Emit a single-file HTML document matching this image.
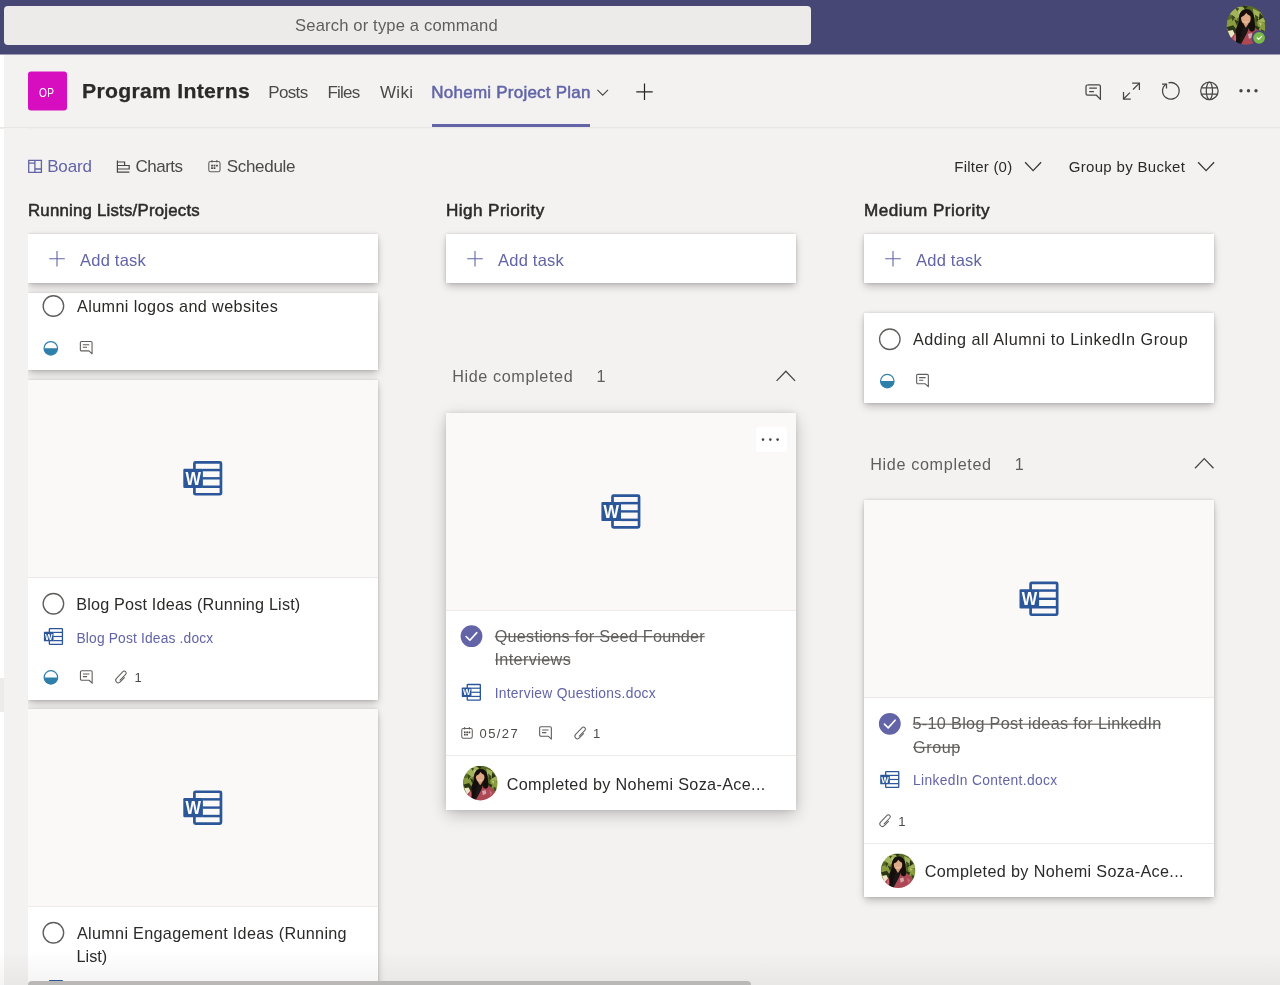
<!DOCTYPE html>
<html lang="en">
<head>
<meta charset="utf-8">
<title>Program Interns - Nohemi Project Plan</title>
<style>
html,body{margin:0;padding:0}
body{width:1280px;height:985px;overflow:hidden;position:relative;background:#f3f2f1;font-family:"Liberation Sans",sans-serif;}
.a{position:absolute}
.t{position:absolute;white-space:nowrap;font-family:"Liberation Sans",sans-serif}
.b{font-weight:700;-webkit-text-stroke:0.25px currentColor}
.sb{-webkit-text-stroke:0.5px currentColor}
.op{transform:scaleX(.8);transform-origin:0 0}
#top{left:0;top:0;width:1280px;height:54px;background:#464775}
#topedge{left:0;top:54px;width:1280px;height:1px;background:#9c9cb4}
#search{left:4px;top:6px;width:807px;height:39px;border-radius:4px;background:#edebe9}
#strip{left:0;top:55px;width:4px;height:930px;background:#fff}
#stripg{left:0;top:678px;width:4px;height:34px;background:#ecebe9}
#hline{left:0;top:127px;width:1280px;height:2px;background:linear-gradient(#e8e7e5 50%,#efeeec 50%)}
#tabline{left:432px;top:124px;width:158px;height:3px;background:#6264a7}
#c1mask{left:4px;top:128px;width:24px;height:857px;background:#f3f2f1}
.card{position:absolute;background:#fff;box-shadow:0 4px 8px -1px rgba(0,0,0,.25),0 0 3px rgba(0,0,0,.15)}
.card.hov{box-shadow:0 5px 16px -1px rgba(0,0,0,.24),0 0 5px rgba(0,0,0,.10)}
.pv{position:absolute;left:0;top:0;right:0;background:#faf9f8;border-bottom:1px solid #edebe9}
.dv{position:absolute;left:0;right:0;height:1px;background:#edebe9}
svg{position:absolute;overflow:visible}
#sbar{z-index:5;left:28px;top:981px;width:723px;height:8px;border-radius:4px;background:#bab8b7}
#txt{position:absolute;left:0;top:0;width:1280px;height:985px;will-change:transform}
#fade{left:0;top:950px;width:1280px;height:35px;background:linear-gradient(rgba(0,0,0,0),rgba(0,0,0,.045))}
#more{left:756px;top:427px;width:30.5px;height:24.6px;background:#fff;border-radius:3px}
</style>
</head>
<body>
<svg width="0" height="0" style="position:absolute">
 <defs>
  <symbol id="word" viewBox="0 0 39 34.5" overflow="visible">
   <rect x="11.1" y="1.35" width="26.55" height="31.8" rx="1.1" fill="none" stroke="#2b579a" stroke-width="2.7"/>
   <rect x="19" y="7.7" width="18.6" height="2.5" fill="#2b579a"/>
   <rect x="19" y="16" width="18.6" height="2.4" fill="#2b579a"/>
   <rect x="19" y="24.4" width="18.6" height="2.5" fill="#2b579a"/>
   <rect x="0" y="7.7" width="19.6" height="19.2" rx="1.2" fill="#2b579a"/>
   <text transform="translate(9.9 23.4) scale(.93 1)" text-anchor="middle" font-family="Liberation Sans, sans-serif" font-weight="700" font-size="17.6" fill="#fff">W</text>
  </symbol>
  <symbol id="cmt" viewBox="0 0 12.8 13.5" overflow="visible">
   <path d="M1.8 0.55h9.2a1.25 1.25 0 0 1 1.25 1.25v11.1l-3.1-2.9H1.8a1.25 1.25 0 0 1-1.25-1.25V1.8a1.25 1.25 0 0 1 1.25-1.25z" fill="none" stroke="#605e5c" stroke-width="1.1" stroke-linejoin="round"/>
   <path d="M3 3.8h6.5M3 6.4h4.2" stroke="#605e5c" stroke-width="1.1" fill="none"/>
  </symbol>
  <symbol id="prog" viewBox="0 0 16 16" overflow="visible">
   <circle cx="8" cy="8" r="7.1" fill="#fff" stroke="#2f7fab" stroke-width="1.3"/>
   <path d="M0.9 8a7.1 7.1 0 0 0 14.2 0z" fill="#2f7fab"/>
  </symbol>
  <symbol id="clip" viewBox="-6 -7 12 14" overflow="visible">
   <g transform="rotate(44)">
    <path d="M2.6 -1.6V4.4A2.6 2.6 0 0 1 -2.6 4.4V-4.9A1.9 1.9 0 0 1 1.2 -4.9V3.2" fill="none" stroke="#605e5c" stroke-width="1" stroke-linecap="round"/>
   </g>
  </symbol>
  <symbol id="cal" viewBox="0 0 13 13" overflow="visible">
   <rect x="0.6" y="1.8" width="11.4" height="10.4" rx="1.8" fill="none" stroke="#605e5c" stroke-width="1.1"/>
   <path d="M3.8 0.2v2.6M8.8 0.2v2.6" stroke="#605e5c" stroke-width="1.1"/>
   <path d="M3 5.9h1.8M5.5 5.9h1.8M8 5.9h1.8M3 8.5h1.8M5.5 8.5h1.8" stroke="#484644" stroke-width="1.7"/>
  </symbol>
  <symbol id="circ" viewBox="0 0 22 22" overflow="visible">
   <circle cx="11" cy="11" r="10.25" fill="#fff" stroke="#605e5c" stroke-width="1.35"/>
  </symbol>
  <symbol id="chk" viewBox="0 0 22 22" overflow="visible">
   <circle cx="11" cy="11" r="10.9" fill="#6264a7"/>
   <path d="M5.6 11.3l3.8 3.8 6.9-7.7" fill="none" stroke="#fff" stroke-width="1.6" stroke-linecap="round" stroke-linejoin="round"/>
  </symbol>
  <symbol id="plus" viewBox="0 0 16 16" overflow="visible">
   <path d="M8 0.2v15.6M0.2 8h15.6" stroke="#6264a7" stroke-width="1.1" fill="none"/>
  </symbol>
  <symbol id="chd" viewBox="0 0 20 12" overflow="visible">
   <path d="M0.6 0.8 10 10.6 19.4 0.8" fill="none" stroke="#3b3a39" stroke-width="1.6"/>
  </symbol>
  <symbol id="chu" viewBox="0 0 20 12" overflow="visible">
   <path d="M0.6 11.2 10 1.4 19.4 11.2" fill="none" stroke="#484644" stroke-width="1.3"/>
  </symbol>
  <symbol id="ava" viewBox="0 0 40 40" overflow="visible">
   <clipPath id="avc"><circle cx="20" cy="20" r="20"/></clipPath>
   <filter id="avb" x="-10%" y="-10%" width="120%" height="120%"><feGaussianBlur stdDeviation="0.8"/></filter>
   <g clip-path="url(#avc)"><g filter="url(#avb)">
    <rect width="40" height="40" fill="#586a26"/>
    <path d="M3 8l8-7 9 1-3 6-8 7zM27 3l8 4 5 10-7 1-5-7z" fill="#a3b35a"/>
    <path d="M1 15l9-3 3 8-8 7-5-3zM31 15l8 3 1 9-7-1z" fill="#8a9c41"/>
    <path d="M0 22l7-2 5 7-6 4zM34 7l4 5-5 3zM28 20l6 2-2 5zM8 14l4 2-1 5zM16 0l6 1-3 3zM30 12l3 2-2 3z" fill="#2b3614"/>
    <path d="M5 9l4 3-3 4zM29 9l4 3-3 4zM35 24l4 2-2 4zM9 2l4 1-2 3z" fill="#3a481b"/>
    <path d="M12 5l5 1-3 4zM33 17l3 1-1 3z" fill="#c3cd7c"/>
    <path d="M1.5 26l5-1 2.5 5-4.5 3z" fill="#efe6c9"/>
    <path d="M4 42c0-8 2-13 8-15l8-3 9-1c5 2 8 6 9 10l1 9z" fill="#ad4855"/>
    <path d="M22 29l4-1 1 4-4 2z" fill="#d7a3ae"/>
    <path d="M8 30l3 1-1 5-3-1zM30 28l4 3-2 4z" fill="#c26a76"/>
    <path d="M15 21l9-1-3 8-7 13h-4l2-9z" fill="#1a1613"/>
    <path d="M12.8 13c0-6 3.4-9.6 7.4-9.6 4.2 0 7.8 3.2 8.2 9 .3 5 1.6 8 .6 12.2-1.6 2.8-4.6 2.2-5.6.2l-.8-4h-5l-1.8 5c-1 3-.4 8-3.4 12.2h-3c1.4-5-.4-9 .4-13 1-5 3-7 3-12z" fill="#15110e"/>
    <ellipse cx="19.9" cy="13.2" rx="4.9" ry="6.2" fill="#dfa985"/>
    <path d="M14.4 11.8c.8-4.6 3.2-6.4 6-6.4 2.8 0 4.6 2 5 5.4-2.6-.8-4.4-2.4-5.2-3.6-1.2 2-2.8 3.8-5.8 4.6z" fill="#15110e"/>
    <path d="M17.6 15.8c1.4 1.2 3.2 1.2 4.6 0-.6 1.8-4 1.8-4.6 0z" fill="#f6ece6"/>
    <path d="M17.4 18.6l2.4 4 2.8-4z" fill="#d39b77"/>
   </g></g>
  </symbol>
 </defs>
</svg>

<div id="top" class="a"></div><div id="topedge" class="a"></div>
<div id="search" class="a"></div>
<div id="strip" class="a"></div><div id="stripg" class="a"></div>
<div id="hline" class="a"></div>
<div id="tabline" class="a"></div>

<!-- ===== column 1 ===== -->
<div class="card" style="left:28px;top:293px;width:350px;height:77px"></div>
<div class="card" style="left:28px;top:380px;width:350px;height:320px"><div class="pv" style="height:197px"></div></div>
<div class="card" style="left:28px;top:709px;width:350px;height:300px"><div class="pv" style="height:197px"></div></div>
<div class="card" style="left:28px;top:234px;width:350px;height:49px"></div>
<div id="c1mask" class="a"></div>

<!-- ===== column 2 ===== -->
<div class="card" style="left:446px;top:234px;width:350px;height:49px"></div>
<div class="card hov" style="left:446px;top:413px;width:350px;height:397px"><div class="pv" style="height:197px"></div><div class="dv" style="top:342px"></div></div>
<div id="more" class="a"></div>

<!-- ===== column 3 ===== -->
<div class="card" style="left:864px;top:234px;width:350px;height:49px"></div>
<div class="card" style="left:864px;top:313px;width:350px;height:90px"></div>
<div class="card" style="left:864px;top:500px;width:350px;height:397px"><div class="pv" style="height:197px"></div><div class="dv" style="top:343px"></div></div>

<div id="fade" class="a"></div>
<div id="sbar" class="a"></div>

<!-- ===== icon overlay (page coordinates) ===== -->
<svg style="left:0;top:0;will-change:transform" width="1280" height="985" viewBox="0 0 1280 985">
 <!-- team logo -->
 <rect x="28" y="71.5" width="39" height="39" rx="3" fill="#d60ec0"/>
 <!-- me avatar -->
 <use href="#ava" x="1226.4" y="5.6" width="39.2" height="39.2"/>
 <circle cx="1259.1" cy="37.8" r="7.6" fill="#464775"/><circle cx="1259.1" cy="37.8" r="5.9" fill="#7ab84a"/>
 <path d="M1257.2 37.9l1.5 1.5 2.9-3.1" fill="none" stroke="#fff" stroke-width="1.2" stroke-linecap="round" stroke-linejoin="round"/>
 <!-- header icons -->
 <g fill="none" stroke="#484644" stroke-width="1.25">
  <path d="M1087.6 84.8h11.2a1.6 1.6 0 0 1 1.6 1.6v13l-4-4.2h-8.8a1.6 1.6 0 0 1-1.6-1.6v-7.2a1.6 1.6 0 0 1 1.6-1.6z" stroke-linejoin="round"/>
  <path d="M1089.2 88h7.7M1089.2 91.6h4.7"/>
  <path d="M1132.1 83.1h7.3v7M1139.4 83.1l-6.4 6.4M1130.8 99h-7.3v-7M1123.5 99l6.4-6.4"/>
  <path d="M1168.45 82.9A8.3 8.3 0 1 1 1166.3 83.9"/>
  <path d="M1162 84.1h4.5v4.3"/>
  <circle cx="1209.4" cy="90.9" r="8.7"/>
  <ellipse cx="1209.4" cy="90.9" rx="3.1" ry="8.7"/>
  <path d="M1201.3 87.8h16.2M1201.3 94h16.2"/>
 </g>
 <g fill="#484644"><circle cx="1241" cy="90.8" r="1.7"/><circle cx="1248.5" cy="90.8" r="1.7"/><circle cx="1256" cy="90.8" r="1.7"/></g>
 <!-- tab chevron + plus -->
 <path d="M597.4 89.8l5.3 5.3 5.3-5.3" fill="none" stroke="#484644" stroke-width="1.1"/>
 <path d="M644.5 83.6v16.4M636.3 91.8h16.4" stroke="#252423" stroke-width="1.2" fill="none"/>
 <!-- view switch icons -->
 <path d="M28.7 160.4h12.7v11.9H28.7zM34.9 160.4v11.9M28.7 163.1h6.2M34.9 169h6.5" fill="none" stroke="#6264a7" stroke-width="1.3"/>
 <path d="M117.4 160.4v11.8h12M117.4 162h7.2v3.5h-7.2M117.4 165.5h11.8v3.5h-11.8" fill="none" stroke="#484644" stroke-width="1.2"/>
 <use href="#cal" x="208.2" y="159.6" width="12.8" height="13.2"/>
 <!-- filter / group chevrons -->
 <use href="#chd" x="1024.6" y="161.6" width="17" height="10.2"/>
 <use href="#chd" x="1197.6" y="161.6" width="17" height="10.2"/>

 <!-- column 1 -->
 <use href="#plus" x="49" y="250.8" width="16" height="16"/>
 <use href="#circ" x="42.4" y="295" width="22" height="22"/>
 <use href="#prog" x="43.2" y="340.7" width="15.2" height="15.2"/>
 <use href="#cmt" x="79.8" y="340.9" width="12.8" height="13.5"/>
 <use href="#word" x="183.3" y="461.1" width="39" height="34.5"/>
 <use href="#circ" x="42.4" y="592.7" width="22" height="22"/>
 <use href="#word" x="43.9" y="628" width="19.2" height="17"/>
 <use href="#prog" x="43.3" y="669.8" width="15.2" height="15.2"/>
 <use href="#cmt" x="79.9" y="670.25" width="12.8" height="13.5"/>
 <use href="#clip" x="115.4" y="670.0" width="12" height="14"/>
 <use href="#word" x="183.3" y="790.4" width="39" height="34.5"/>
 <use href="#circ" x="42.4" y="921.7" width="22" height="22"/>
 <use href="#word" x="43.9" y="979.9" width="19.2" height="17"/>

 <!-- column 2 -->
 <use href="#plus" x="467" y="250.8" width="16" height="16"/>
 <use href="#chu" x="776" y="369.9" width="19.7" height="11.8"/>
 <g fill="#484644"><circle cx="763" cy="439.6" r="1.3"/><circle cx="770.3" cy="439.6" r="1.3"/><circle cx="777.6" cy="439.6" r="1.3"/></g>
 <use href="#word" x="601.4" y="494.2" width="39" height="34.5"/>
 <use href="#chk" x="460.5" y="625.2" width="22" height="22"/>
 <use href="#word" x="461.8" y="683.8" width="19.2" height="17"/>
 <use href="#cal" x="461.2" y="726.8" width="12" height="12.2"/>
 <use href="#cmt" x="539.1" y="726.2" width="12.8" height="13.5"/>
 <use href="#clip" x="574.6" y="726.0" width="12" height="14"/>
 <use href="#ava" x="463" y="765.8" width="34.6" height="34.6"/>

 <rect x="494.8" y="636.15" width="210.0" height="1.1" fill="#605e5c"/>
 <rect x="495.2" y="659.35" width="75.2" height="1.1" fill="#605e5c"/>
 <rect x="912.8" y="723.65" width="248.0" height="1.1" fill="#605e5c"/>
 <rect x="913.1" y="746.75" width="46.9" height="1.1" fill="#605e5c"/>
 <!-- column 3 -->
 <use href="#plus" x="885" y="250.8" width="16" height="16"/>
 <use href="#circ" x="878.8" y="328.2" width="22" height="22"/>
 <use href="#prog" x="879.7" y="373.5" width="15.2" height="15.2"/>
 <use href="#cmt" x="916.1" y="373.8" width="12.8" height="13.5"/>
 <use href="#chu" x="1194.4" y="457.3" width="19.7" height="11.8"/>
 <use href="#word" x="1019.5" y="581.6" width="39" height="34.5"/>
 <use href="#chk" x="878.8" y="712.8" width="22" height="22"/>
 <use href="#word" x="880.2" y="771" width="19.2" height="17"/>
 <use href="#clip" x="879.5" y="813.7" width="12" height="14"/>
 <use href="#ava" x="880.8" y="853.4" width="34.6" height="34.6"/>
</svg>

<div id="txt">
<span class="t" style="left:295.12px;top:16.29px;font-size:16.6px;line-height:19.92px;color:#605e5c;letter-spacing:0.146px;">Search or type a command</span>
<span class="t op" style="left:38.98px;top:85.67px;font-size:12.6px;line-height:15.12px;color:#ffffff;letter-spacing:0.529px;">OP</span>
<span class="t b" style="left:81.90px;top:79.09px;font-size:20.4px;line-height:24.48px;color:#2b2a29;letter-spacing:0.266px;transform:scaleX(1.04);transform-origin:0 0;">Program Interns</span>
<span class="t" style="left:268.18px;top:83.11px;font-size:17px;line-height:20.4px;color:#4c4a48;letter-spacing:-0.630px;">Posts</span>
<span class="t" style="left:327.42px;top:83.11px;font-size:17px;line-height:20.4px;color:#4c4a48;letter-spacing:-0.742px;">Files</span>
<span class="t" style="left:380.01px;top:83.11px;font-size:17px;line-height:20.4px;color:#4c4a48;letter-spacing:0.319px;">Wiki</span>
<span class="t sb" style="left:431.34px;top:83.11px;font-size:17px;line-height:20.4px;color:#6264a7;letter-spacing:0.234px;">Nohemi Project Plan</span>
<span class="t" style="left:47.18px;top:157.31px;font-size:17px;line-height:20.4px;color:#6264a7;letter-spacing:-0.145px;">Board</span>
<span class="t" style="left:135.56px;top:157.31px;font-size:17px;line-height:20.4px;color:#4c4a48;letter-spacing:-0.533px;">Charts</span>
<span class="t" style="left:226.70px;top:157.31px;font-size:17px;line-height:20.4px;color:#4c4a48;letter-spacing:-0.302px;">Schedule</span>
<span class="t" style="left:954.28px;top:157.80px;font-size:15px;line-height:18px;color:#2b2a29;letter-spacing:0.232px;">Filter (0)</span>
<span class="t" style="left:1068.75px;top:157.80px;font-size:15px;line-height:18px;color:#2b2a29;letter-spacing:0.318px;">Group by Bucket</span>
<span class="t sb" style="left:27.87px;top:200.86px;font-size:16px;line-height:19.2px;color:#2b2a29;letter-spacing:0.205px;transform:scaleX(1.05);transform-origin:0 0;">Running Lists/Projects</span>
<span class="t sb" style="left:446.33px;top:200.86px;font-size:16px;line-height:19.2px;color:#2b2a29;letter-spacing:0.391px;transform:scaleX(1.07);transform-origin:0 0;">High Priority</span>
<span class="t sb" style="left:864.33px;top:200.86px;font-size:16px;line-height:19.2px;color:#2b2a29;letter-spacing:0.440px;transform:scaleX(1.07);transform-origin:0 0;">Medium Priority</span>
<span class="t" style="left:80.03px;top:250.78px;font-size:16.5px;line-height:19.8px;color:#6264a7;letter-spacing:0.222px;">Add task</span>
<span class="t" style="left:498.03px;top:250.78px;font-size:16.5px;line-height:19.8px;color:#6264a7;letter-spacing:0.222px;">Add task</span>
<span class="t" style="left:916.03px;top:250.78px;font-size:16.5px;line-height:19.8px;color:#6264a7;letter-spacing:0.222px;">Add task</span>
<span class="t" style="left:77.07px;top:297.27px;font-size:16.2px;line-height:19.44px;color:#2b2a29;letter-spacing:0.375px;">Alumni logos and websites</span>
<span class="t" style="left:76.18px;top:594.67px;font-size:16.2px;line-height:19.44px;color:#2b2a29;letter-spacing:0.187px;">Blog Post Ideas (Running List)</span>
<span class="t" style="left:76.49px;top:630.94px;font-size:13.8px;line-height:16.56px;color:#6264a7;letter-spacing:0.165px;">Blog Post Ideas .docx</span>
<span class="t" style="left:134.52px;top:669.90px;font-size:13px;line-height:15.6px;color:#4c4a48;letter-spacing:0.000px;">1</span>
<span class="t" style="left:76.98px;top:923.87px;font-size:16.2px;line-height:19.44px;color:#2b2a29;letter-spacing:0.309px;">Alumni Engagement Ideas (Running</span>
<span class="t" style="left:76.42px;top:946.67px;font-size:16.2px;line-height:19.44px;color:#2b2a29;letter-spacing:0.061px;">List)</span>
<span class="t" style="left:452.14px;top:367.27px;font-size:16.2px;line-height:19.44px;color:#605e5c;letter-spacing:0.621px;">Hide completed</span>
<span class="t" style="left:596.53px;top:367.27px;font-size:16.2px;line-height:19.44px;color:#605e5c;letter-spacing:0.000px;">1</span>
<span class="t st" style="left:494.74px;top:627.47px;font-size:16.2px;line-height:19.44px;color:#605e5c;letter-spacing:0.260px;">Questions for Seed Founder</span>
<span class="t st" style="left:494.49px;top:650.27px;font-size:16.2px;line-height:19.44px;color:#605e5c;letter-spacing:0.376px;">Interviews</span>
<span class="t" style="left:494.64px;top:685.74px;font-size:13.8px;line-height:16.56px;color:#6264a7;letter-spacing:0.302px;">Interview Questions.docx</span>
<span class="t" style="left:479.53px;top:725.90px;font-size:13px;line-height:15.6px;color:#4c4a48;letter-spacing:1.392px;">05/27</span>
<span class="t" style="left:593.00px;top:725.90px;font-size:13px;line-height:15.6px;color:#4c4a48;letter-spacing:0.000px;">1</span>
<span class="t" style="left:506.71px;top:774.67px;font-size:16.2px;line-height:19.44px;color:#2b2a29;letter-spacing:0.342px;">Completed by Nohemi Soza-Ace...</span>
<span class="t" style="left:912.98px;top:330.27px;font-size:16.2px;line-height:19.44px;color:#2b2a29;letter-spacing:0.509px;">Adding all Alumni to LinkedIn Group</span>
<span class="t" style="left:870.14px;top:454.87px;font-size:16.2px;line-height:19.44px;color:#605e5c;letter-spacing:0.656px;">Hide completed</span>
<span class="t" style="left:1014.75px;top:454.87px;font-size:16.2px;line-height:19.44px;color:#605e5c;letter-spacing:0.000px;">1</span>
<span class="t st" style="left:912.51px;top:714.47px;font-size:16.2px;line-height:19.44px;color:#605e5c;letter-spacing:0.325px;">5-10 Blog Post ideas for LinkedIn</span>
<span class="t st" style="left:913.06px;top:737.87px;font-size:16.2px;line-height:19.44px;color:#605e5c;letter-spacing:0.582px;">Group</span>
<span class="t" style="left:912.96px;top:773.34px;font-size:13.8px;line-height:16.56px;color:#6264a7;letter-spacing:0.343px;">LinkedIn Content.docx</span>
<span class="t" style="left:898.24px;top:813.50px;font-size:13px;line-height:15.6px;color:#4c4a48;letter-spacing:0.000px;">1</span>
<span class="t" style="left:924.71px;top:862.27px;font-size:16.2px;line-height:19.44px;color:#2b2a29;letter-spacing:0.351px;">Completed by Nohemi Soza-Ace...</span>
</div>
</body>
</html>
